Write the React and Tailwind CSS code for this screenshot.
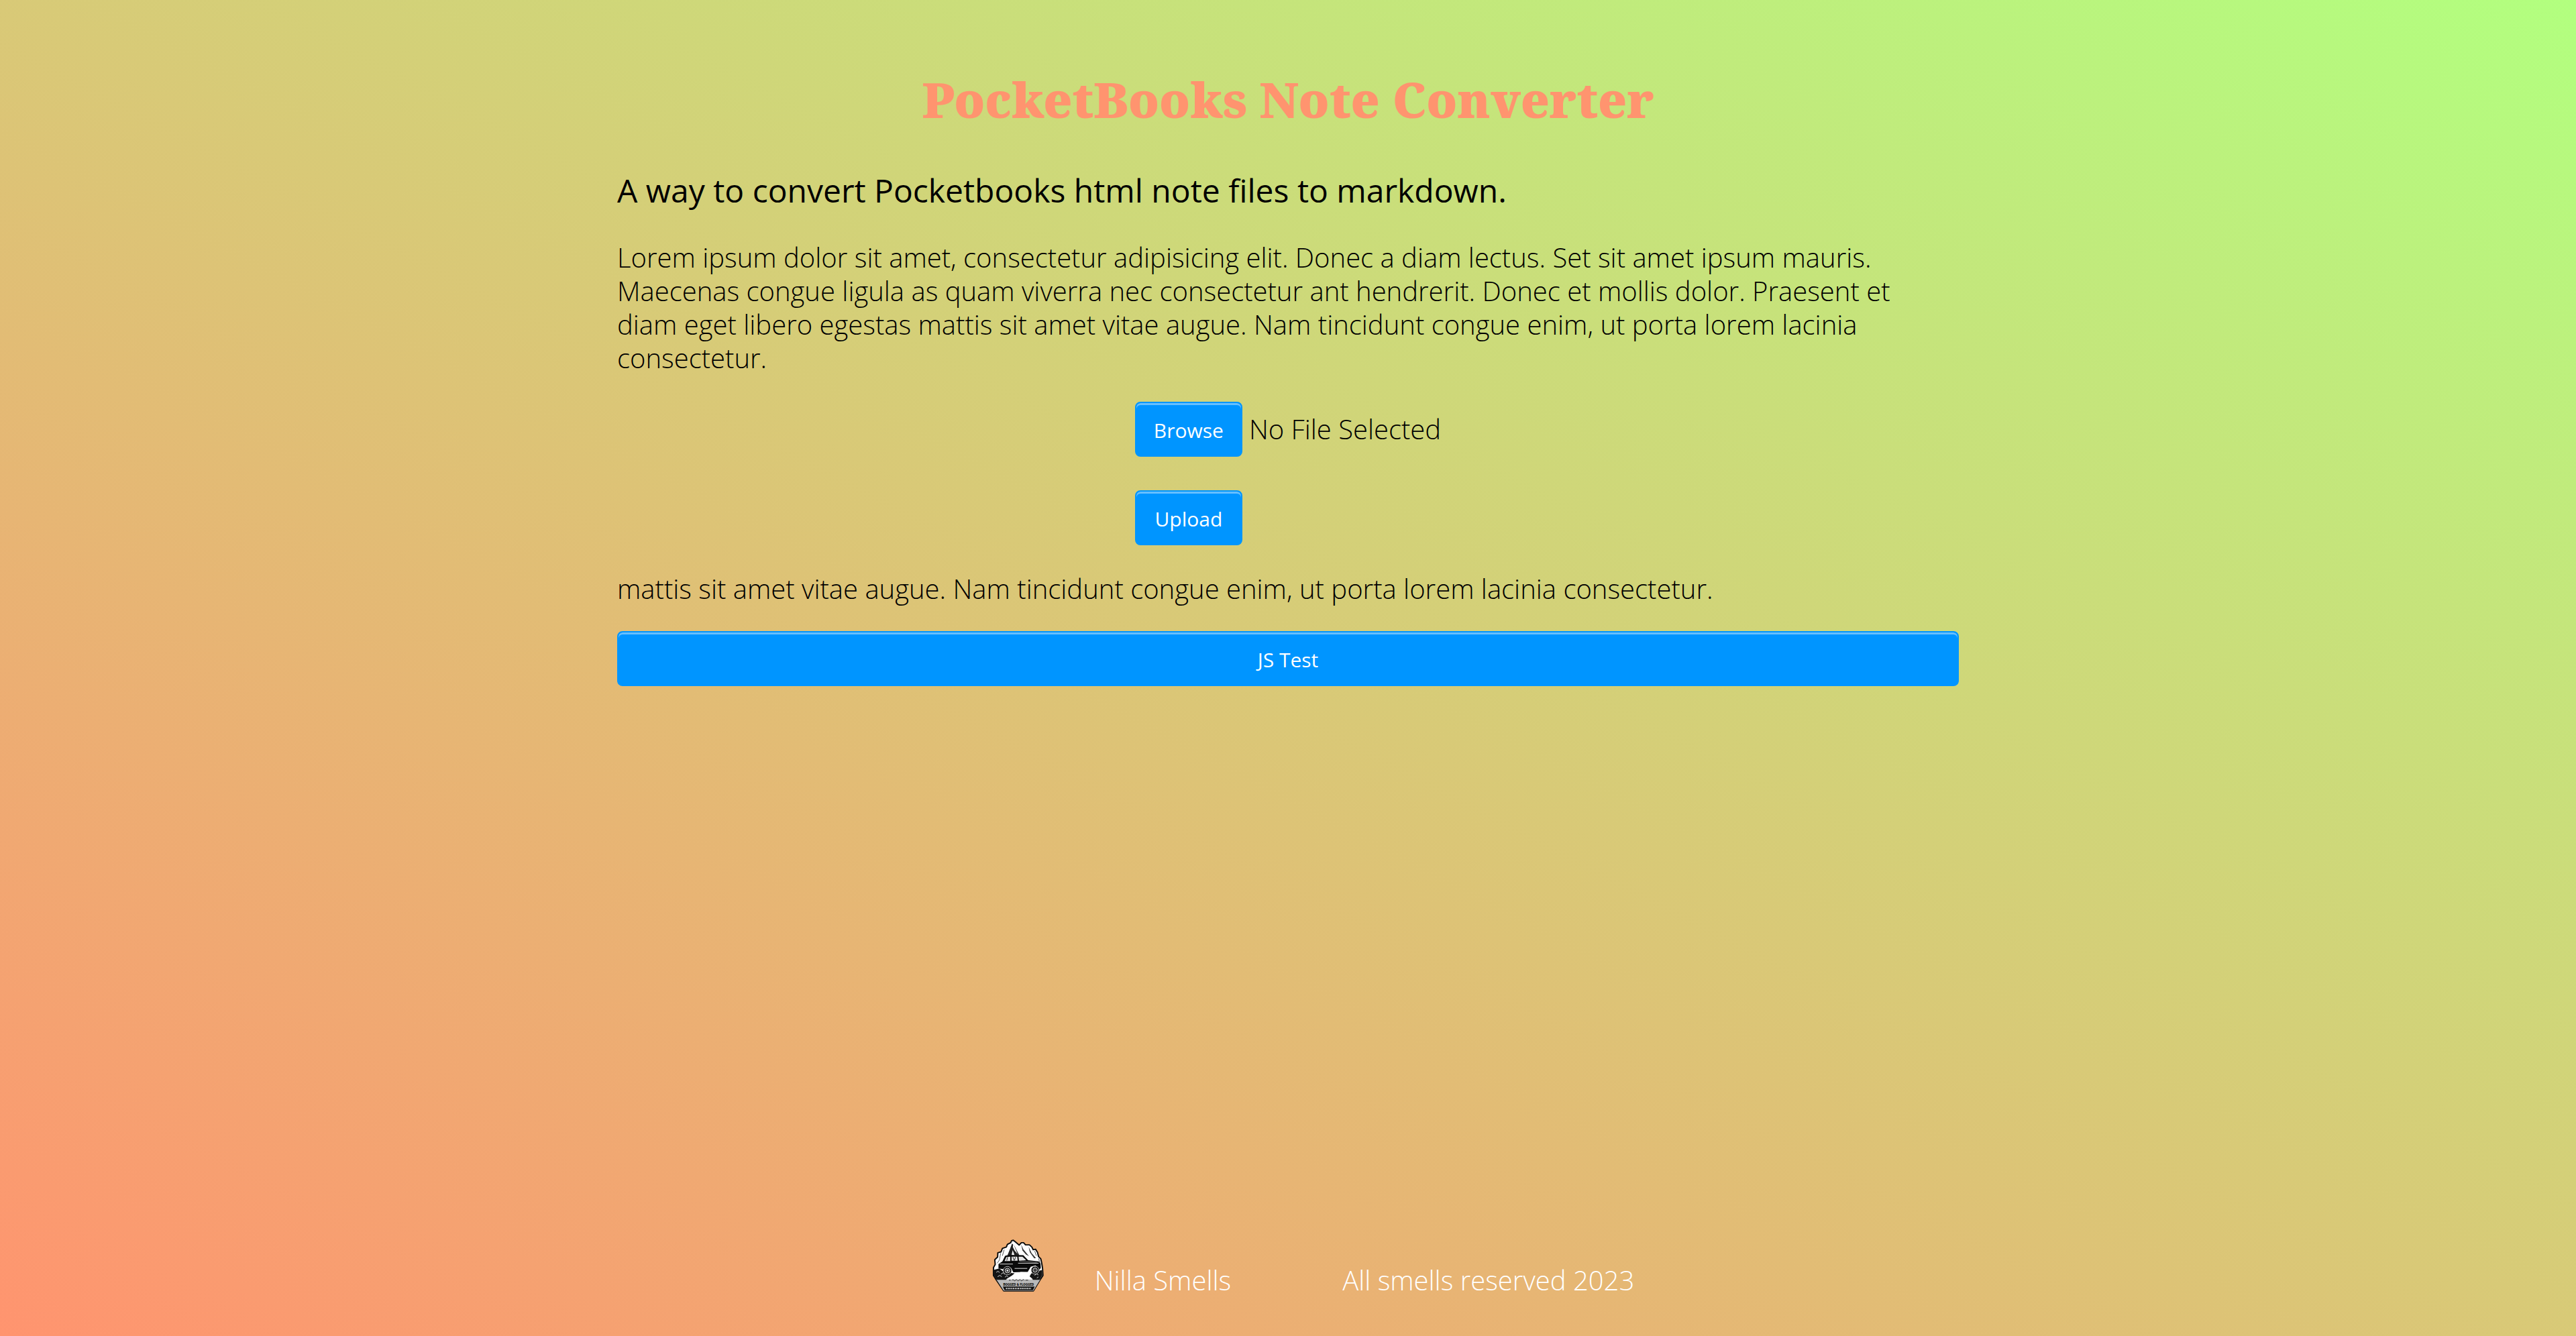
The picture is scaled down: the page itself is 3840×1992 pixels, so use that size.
import React, { useRef } from "react";

const buttonClass =
  "h-[82px] rounded-[8px] border-2 border-[#0095ff] bg-[#0095ff] px-[26px] pt-1 text-center text-[30px] leading-[40px] font-normal text-white shadow-[inset_0_3px_0_0_rgba(255,255,255,0.4)] cursor-pointer";

function Logo() {
  return (
    <svg viewBox="9 3 240 240" className="mb-2 size-[78px] shrink-0" role="img" aria-label="Bogged and Flogged">
      <path
        d="M62 239 L28 189 L15 168 L15 132 L23 118 L21 96 L34 84 L35 64 L50 60 L56 44 L74 38 L79 26 L94 18 L98 9 L106 7 L115 14 L133 29 L143 18 L153 18 L162 28 L180 28 L191 38 L197 50 L208 48 L217 62 L222 82 L232 92 L236 110 L240 134 L242 168 L228 190 L198 239 Z"
        fill="#fff"
        stroke="#0a0a0a"
        strokeWidth="6"
        strokeLinejoin="round"
      />
      <path d="M28 186 H230 L198 238 H62 Z" fill="#b9b9b9" />
      <path d="M100 22 L92 44 L80 74 L98 76 L103 52 L112 76 L134 76 L120 50 L110 30 Z" fill="#222" />
      <path d="M106 18 L114 42 L126 70 L112 54 L104 38 Z" fill="#fff" />
      <path d="M142 26 L152 48 L178 80 L164 72 L148 54 Z M176 36 L190 66 L210 88 L202 90 L182 62 Z" fill="#333" />
      <path d="M48 66 L42 98 L32 112 M64 50 L56 78 M204 56 L212 78 M222 90 L228 112" fill="none" stroke="#555" strokeWidth="3" />
      <path d="M18 142 L42 136 L60 150 L86 156 L112 158 L96 174 L72 188 H30 L18 168 Z" fill="#151515" />
      <path d="M188 160 L206 150 L238 144 L239 166 L226 188 H196 L180 174 Z" fill="#151515" />
      <path d="M28 154 l8 -5 7 6 M50 162 l9 -6 8 7 M34 174 l10 -6 9 6 M68 176 l8 -6 6 5 M204 168 l8 -7 9 5 M214 180 l7 -5" fill="none" stroke="#ddd" strokeWidth="3" />
      <path d="M56 104 L68 78 L84 74 L152 75 L174 98 L222 104 L231 114 L232 134 L226 142 L208 122 L186 128 L172 152 L106 154 L96 134 L78 128 L60 140 L38 136 L38 116 Z" fill="#0a0a0a" />
      <path d="M66 102 L74 84 L92 82 L92 102 Z M98 82 H124 L126 101 H98 Z M130 82 L148 82 L165 98 L132 101 Z" fill="#e6e6e6" />
      <path d="M80 84 L76 100 M104 84 L110 100 M116 84 L112 98" stroke="#222" strokeWidth="3" />
      <path d="M44 116 H104 M128 112 L222 112 M112 136 H170" stroke="#e2e2e2" strokeWidth="3" />
      <path d="M134 103 L214 108" stroke="#999" strokeWidth="2" />
      <circle cx="79" cy="146" r="19" fill="#0a0a0a" stroke="#bbb" strokeWidth="3" />
      <circle cx="79" cy="146" r="11" fill="#444" stroke="#ddd" strokeWidth="3" />
      <circle cx="79" cy="146" r="4" fill="#eee" />
      <circle cx="206" cy="144" r="18" fill="#0a0a0a" stroke="#bbb" strokeWidth="3" />
      <circle cx="206" cy="144" r="10" fill="#444" stroke="#ddd" strokeWidth="3" />
      <path d="M72 186 L108 164 L140 152 L180 154 L178 170 L196 186 Z" fill="#fff" />
      <path d="M86 190 h8 M100 190 q5 -6 8 0 t8 0 t8 0 t8 0 t8 0 t8 0 t8 0 M162 190 h12" fill="none" stroke="#222" strokeWidth="3" />
      <text x="130" y="214" textAnchor="middle" fontFamily="Roboto, sans-serif" fontWeight="900" fontSize="15" fill="#0a0a0a">
        BOGGED &amp; FLOGGED
      </text>
      <path d="M58 219 H204 L196 236 H66 Z" fill="#111" />
      <path d="M72 228 H188" stroke="#c8c8c8" strokeWidth="7" strokeDasharray="5 2 3 2 6 3" />
    </svg>
  );
}

export default function App() {
  const fileInput = useRef(null);
  return (
    <div className="flex min-h-screen flex-col items-center bg-[linear-gradient(to_top_right,#ff946f,#b2ff7f)] font-['Open_Sans',sans-serif] text-[40px] leading-[50px] font-light text-black">
      <main className="flex w-full max-w-[2000px] flex-col">
        <h1 className="mt-[100px] text-center font-['Noto_Serif','DejaVu_Serif',serif] text-[72px] leading-[96px] font-black text-[#ff946f]">
          PocketBooks Note Converter
        </h1>
        <h2 className="mt-[58px] text-[48px] leading-[60px] font-normal">
          A way to convert Pocketbooks html note files to markdown.
        </h2>
        <p className="mt-[45px] pr-10">
          Lorem ipsum dolor sit amet, consectetur adipisicing elit. Donec a diam lectus. Set sit amet ipsum mauris.
          Maecenas congue ligula as quam viverra nec consectetur ant hendrerit. Donec et mollis dolor. Praesent et diam
          eget libero egestas mattis sit amet vitae augue. Nam tincidunt congue enim, ut porta lorem lacinia consectetur.
        </p>
        <form className="mx-auto mt-10 flex flex-col items-stretch gap-[50px]" onSubmit={(e) => e.preventDefault()}>
          <div className="flex items-center gap-[10px]">
            <input ref={fileInput} type="file" aria-label="Note file" className="hidden" />
            <button type="button" className={`${buttonClass} min-w-40`} onClick={() => fileInput.current.click()}>
              Browse
            </button>
            <span>No File Selected</span>
          </div>
          <button type="submit" className={`${buttonClass} min-w-40 self-start`}>
            Upload
          </button>
        </form>
        <p className="mt-10">
          mattis sit amet vitae augue. Nam tincidunt congue enim, ut porta lorem lacinia consectetur.
        </p>
        <button type="button" className={`${buttonClass} mt-[38px]`}>
          JS Test
        </button>
      </main>
      <footer className="mt-auto mb-[58px] flex items-end pl-[75px] text-white">
        <Logo />
        <span className="ml-[75px]">Nilla Smells</span>
        <span className="ml-[166px]">All smells reserved 2023</span>
      </footer>
    </div>
  );
}
